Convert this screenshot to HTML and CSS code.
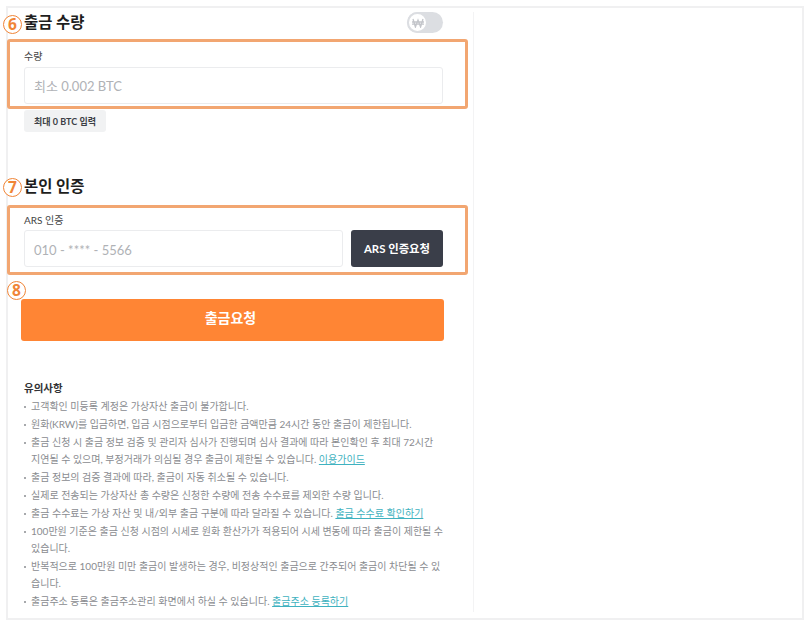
FILE: index.html
```html
<!DOCTYPE html>
<html lang="ko">
<head>
<meta charset="utf-8">
<title>출금</title>
<link rel="stylesheet" href="styles.css">
</head>
<body>
<div class="frame">
  <main class="col">
    <section class="amount">
      <div class="head-row">
        <h2 class="title">출금 수량</h2>
        <div class="toggle">
          <span class="knob">
            <svg class="won" viewBox="0 0 12 10" width="12" height="10" aria-hidden="true"><path d="M1 1l2.4 8L6 2l2.6 7L11 1M0 4h12M0 6.2h12" fill="none" stroke="#c3c5ca" stroke-width="1.3"/></svg>
          </span>
        </div>
      </div>
      <label class="label label-amount">수량</label>
      <div class="input">최소 0.002 BTC</div>
      <button class="max-btn">최대 0 BTC 입력</button>
    </section>
    <section class="verify">
      <h2 class="title">본인 인증</h2>
      <label class="label label-ars">ARS 인증</label>
      <div class="ars-row">
        <div class="input input-ars">010 - **** - 5566</div>
        <button class="ars-btn">ARS 인증요청</button>
      </div>
    </section>
    <button class="submit">출금요청</button>
    <section class="notes">
      <h3 class="notes-title">유의사항</h3>
      <ul class="list">
        <li>고객확인 미등록 계정은 가상자산 출금이 불가합니다.</li>
        <li>원화(KRW)를 입금하면, 입금 시점으로부터 입금한 금액만큼 24시간 동안 출금이 제한됩니다.</li>
        <li>출금 신청 시 출금 정보 검증 및 관리자 심사가 진행되며 심사 결과에 따라 본인확인 후 최대 72시간 지연될 수 있으며, 부정거래가 의심될 경우 출금이 제한될 수 있습니다. <a class="link">이용가이드</a></li>
        <li>출금 정보의 검증 결과에 따라, 출금이 자동 취소될 수 있습니다.</li>
        <li>실제로 전송되는 가상자산 총 수량은 신청한 수량에 전송 수수료를 제외한 수량 입니다.</li>
        <li>출금 수수료는 가상 자산 및 내/외부 출금 구분에 따라 달라질 수 있습니다. <a class="link">출금 수수료 확인하기</a></li>
        <li>100만원 기준은 출금 신청 시점의 시세로 원화 환산가가 적용되어 시세 변동에 따라 출금이 제한될 수 있습니다.</li>
        <li>반복적으로 100만원 미만 출금이 발생하는 경우, 비정상적인 출금으로 간주되어 출금이 차단될 수 있습니다.</li>
        <li>출금주소 등록은 출금주소관리 화면에서 하실 수 있습니다. <a class="link">출금주소 등록하기</a></li>
      </ul>
    </section>
  </main>
  <div class="mark box-a"></div>
  <div class="mark box-b"></div>
  <span class="num num-6">6</span>
  <span class="num num-7">7</span>
  <span class="num num-8">8</span>
</div>
</body>
</html>
```
FILE: styles.css
```css
* { box-sizing: border-box; }
html, body { margin: 0; padding: 0; background: #fff; }
body {
  width: 809px;
  height: 626px;
  overflow: hidden;
  padding: 6px 5px 6px 6px;
  font-family: Lato, "Noto Sans CJK KR", sans-serif;
  color: #222;
}
.frame {
  position: relative;
  width: 798px;
  height: 614px;
  border: 2px solid #f0f0f1;
}
.col {
  width: 466px;
  height: 600px;
  padding: 0 30px 0 16px;
  border-right: 1px solid #f3f3f4;
}
.head-row {
  display: flex;
  justify-content: space-between;
  align-items: center;
  height: 21px;
  margin-top: 4px;
}
.title {
  margin: 0;
  font-size: 15.4px;
  line-height: 21px;
  font-weight: 700;
  color: #1e1e20;
}
.toggle {
  width: 36px;
  height: 21px;
  border-radius: 11px;
  background: #dcdee2;
}
.knob {
  display: flex;
  align-items: center;
  justify-content: center;
  width: 21px;
  height: 21px;
  border: 2px solid #dcdee2;
  border-radius: 50%;
  background: #fff;
}
.won { display: block; }
.label {
  display: block;
  font-size: 10px;
  line-height: 14px;
  color: #444;
}
.label-amount { margin-top: 16px; }
.input {
  height: 37px;
  margin-top: 4px;
  padding-left: 9px;
  border: 1px solid #ebecee;
  border-radius: 3px;
  background: #fff;
  font-size: 13px;
  line-height: 37px;
  color: #b0b2b6;
}
.max-btn {
  display: block;
  width: 82px;
  height: 22px;
  margin-top: 6px;
  padding: 0;
  border: 0;
  border-radius: 3px;
  background: #f1f2f3;
  font-family: inherit;
  font-size: 9px;
  font-weight: 700;
  color: #3c3f45;
}
.verify { margin-top: 44px; }
.label-ars { margin-top: 16px; }
.ars-row {
  display: flex;
  gap: 8px;
  margin-top: 3px;
}
.input-ars {
  flex: 1;
  margin-top: 0;
  line-height: 38px;
}
.ars-btn {
  width: 92px;
  height: 37px;
  padding: 0 0 2px;
  border: 0;
  border-radius: 3px;
  background: #3a3e49;
  color: #fff;
  font-family: inherit;
  font-size: 11.4px;
  font-weight: 700;
}
.submit {
  display: block;
  width: 423px;
  height: 42px;
  margin: 32px 0 0 -3px;
  padding: 0 4px 6px 0;
  border: 0;
  border-radius: 3px;
  background: #ff8534;
  color: #fff;
  font-family: inherit;
  font-size: 14px;
  font-weight: 700;
}
.notes { margin-top: 40px; }
.notes-title {
  margin: 0;
  font-size: 10.5px;
  line-height: 15px;
  font-weight: 700;
  color: #333336;
}
.list {
  margin: 2px -1px 0 0;
  padding: 0;
  list-style: none;
  font-size: 10px;
  line-height: 17px;
  color: #8a8c90;
}
.list li {
  position: relative;
  margin-bottom: 1px;
  padding-left: 7px;
}
.list li::before {
  content: "";
  position: absolute;
  left: 0;
  top: 8px;
  width: 2px;
  height: 2px;
  border-radius: 50%;
  background: #8a8c90;
}
.link {
  color: #3fb2c0;
  text-decoration: underline;
}
.mark {
  position: absolute;
  left: -1px;
  width: 461px;
  border: 3px solid #f2a671;
  border-radius: 3px;
  pointer-events: none;
}
.box-a { top: 31px; height: 70px; }
.box-b { top: 197px; height: 70px; }
.num {
  position: absolute;
  display: flex;
  align-items: center;
  justify-content: center;
  width: 19px;
  height: 19px;
  border: 1.5px solid #f08537;
  border-radius: 50%;
  background: #fff;
  color: #f08537;
  font-family: "Noto Sans", sans-serif;
  font-size: 15.5px;
  font-weight: 700;
  line-height: 1;
}
.num-6 { left: -5px; top: 7px; }
.num-7 { left: -5px; top: 170px; }
.num-8 { left: -1px; top: 273px; }
```
